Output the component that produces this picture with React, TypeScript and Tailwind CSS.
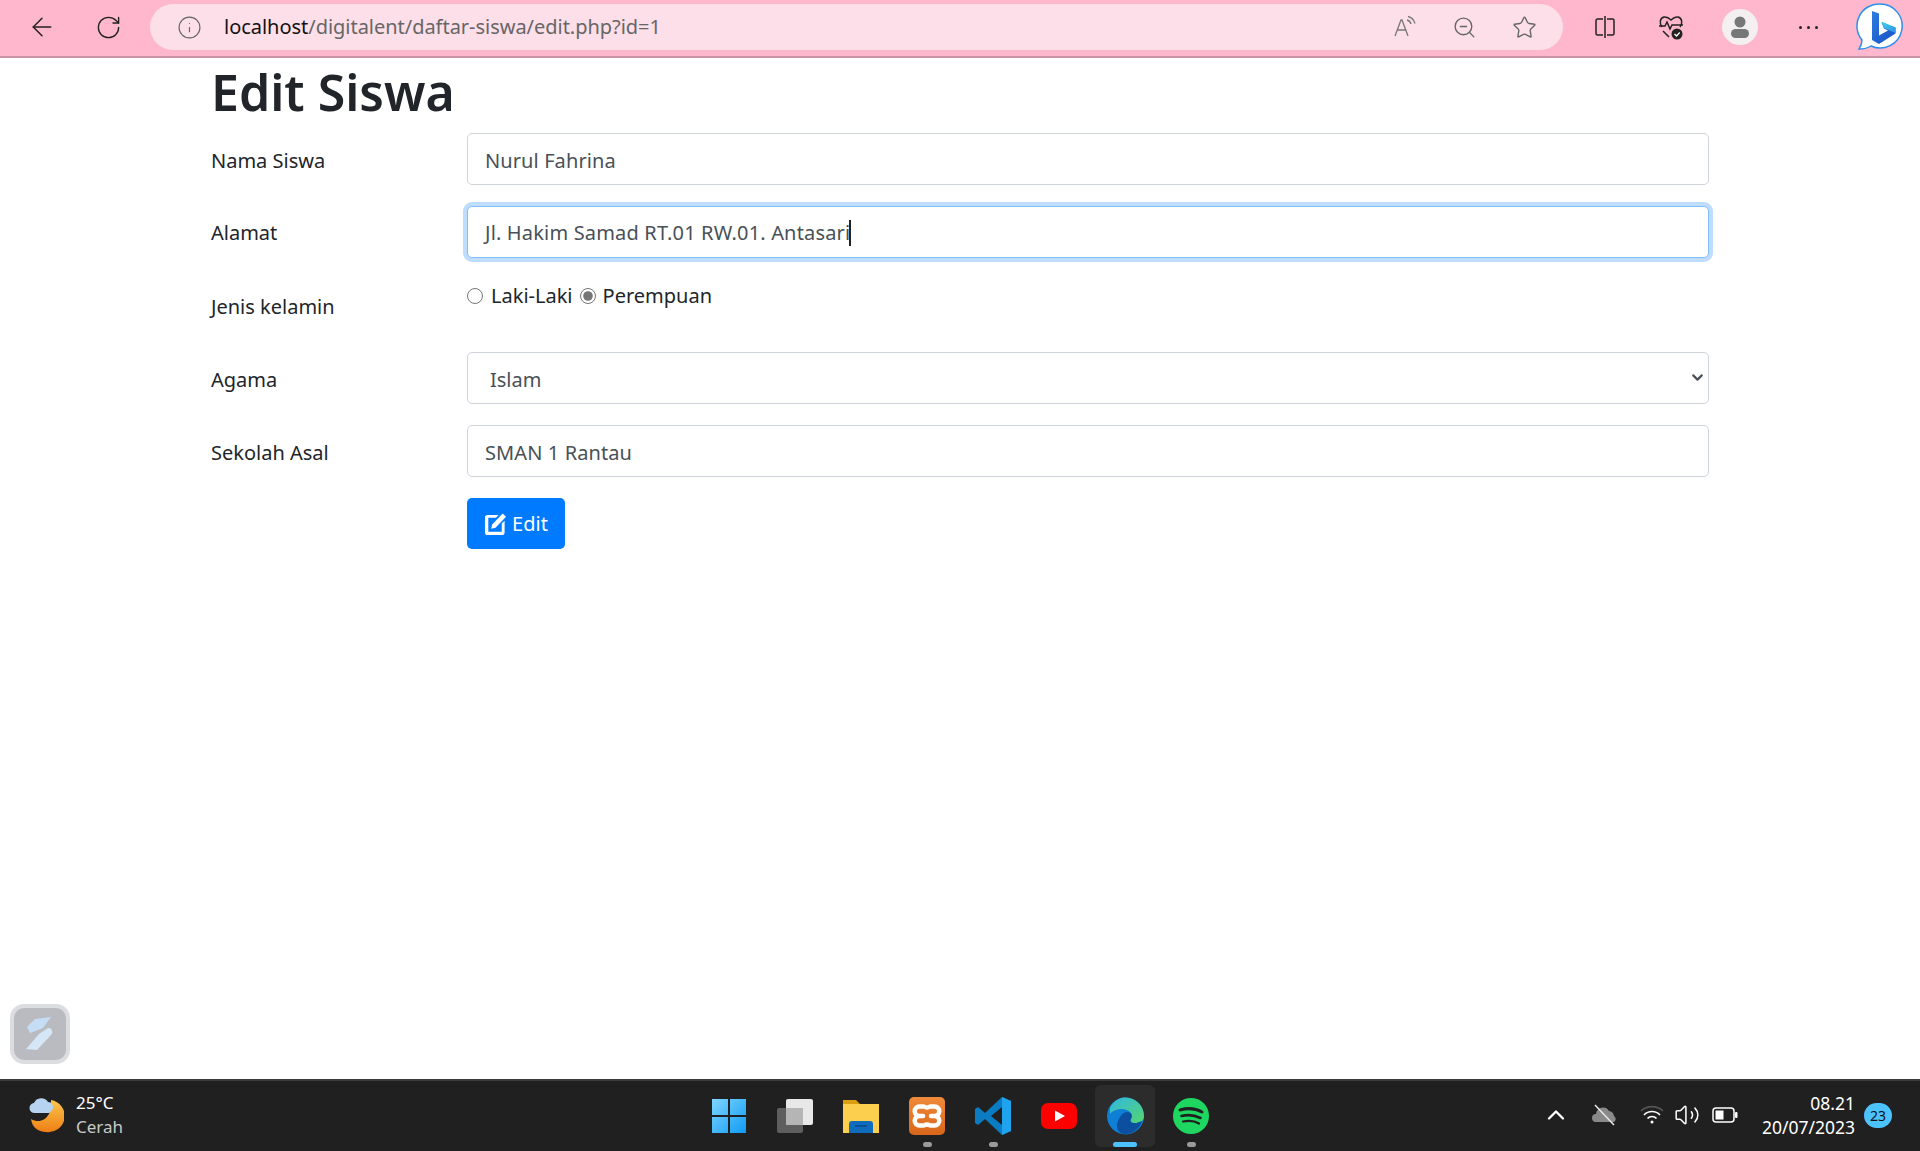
import { ArrowLeft, RotateCw, Info, ZoomOut, Star, ChevronUp, ChevronDown, Volume2 } from "lucide-react";

const font = "font-['Noto_Sans','Open_Sans',sans-serif]";

function ReadAloud() {
  return (
    <svg width="24" height="24" viewBox="0 0 24 24" fill="none" stroke="#777" strokeWidth="1.3">
      <path d="M2 21 8 5h1l6 16M4.500 15h9" />
      <path d="M14 5c2 .5 3.500 2 4 4M15 1.500c3.500 .8 6 3.500 7 7" />
    </svg>
  );
}

function SplitScreen() {
  return (
    <svg width="24" height="24" viewBox="0 0 24 24" fill="none" stroke="#222" strokeWidth="1.5">
      <path d="M10 4H4.500A1.500 1.500 0 0 0 3 5.500v13A1.500 1.500 0 0 0 4.500 20H10M14 4h5.500A1.500 1.500 0 0 1 21 5.500v13a1.500 1.500 0 0 1-1.500 1.500H14M12 1v22" />
    </svg>
  );
}

function HealthHeart() {
  return (
    <svg width="28" height="28" viewBox="0 0 28 28" fill="none">
      <path d="M5 14C2 10 3 5 7 4c3-.5 5 1 7 3 2-2 4-3.500 7-3 4 1 5 6 2 10" stroke="#222" strokeWidth="1.500" />
      <path d="M2 13h6l2-4 3 7 2-4h11M6 18l6 6" stroke="#222" strokeWidth="1.500" />
      <circle cx="20" cy="21" r="5.500" fill="#222" />
      <path d="m17.500 21 2 2 3.200-3.500" stroke="#fff" strokeWidth="1.300" />
    </svg>
  );
}

function BingLogo() {
  return (
    <svg width="48" height="50" viewBox="0 0 48 50">
      <defs>
        <linearGradient id="bing-b" x1="0" y1="0" x2="1" y2="1">
          <stop offset="0" stopColor="#2a7de1" />
          <stop offset="1" stopColor="#1b4fc4" />
        </linearGradient>
        <linearGradient id="bing-c" x1="0" y1="0" x2="1" y2="1">
          <stop offset="0" stopColor="#42d6e8" />
          <stop offset="1" stopColor="#2f8fe8" />
        </linearGradient>
      </defs>
      <path d="M24 2a22 22 0 1 1-9 42c-3 2-7 3-12 3 2-3 3-6 3-9A22 22 0 0 1 24 2Z" fill="#fff" stroke="#2f8fe8" strokeWidth="1.500" />
      <path d="M16 9l7 2.500v22l9-5-4-2-2.500-6 14 5v6L23 42l-7-4Z" fill="url(#bing-b)" />
      <path d="M25.500 19.500 39.500 25.500v5.500L28 26Z" fill="url(#bing-c)" />
    </svg>
  );
}

function BrowserBar() {
  return (
    <header className="flex h-[58px] shrink-0 items-center border-b-2 border-[#c993a6] bg-[#ffb7ce] pb-[2px]">
      <div className="flex w-[150px] shrink-0 items-center pl-[27px]">
        <ArrowLeft size={30} strokeWidth={1.2} className="text-[#222]" />
        <RotateCw size={27} strokeWidth={1.2} className="ml-[38px] text-[#222]" />
      </div>
      <div className="flex h-[46px] w-[1413px] shrink-0 items-center rounded-full bg-[#fddfe9] pl-[27px] pr-[26px]">
        <Info size={25} strokeWidth={1.1} className="text-[#666]" />
        <div className="ml-[22px] flex-1 text-[20px] tracking-[-0.03px] text-[#666]">
          <span className="text-[#111]">localhost</span>/digitalent/daftar-siswa/edit.php?id=1
        </div>
        <div className="flex items-center gap-[35px]">
          <ReadAloud />
          <ZoomOut size={25} strokeWidth={1.3} className="text-[#666]" />
          <Star size={25} strokeWidth={1.3} className="text-[#666]" />
        </div>
      </div>
      <div className="ml-[30px] flex items-center">
        <SplitScreen />
        <div className="ml-[40px]"><HealthHeart /></div>
        <div className="ml-[37px] flex h-[36px] w-[36px] items-center justify-center rounded-full bg-[#f4eff1]">
          <svg width="24" height="26" viewBox="0 0 24 26" fill="#777">
            <circle cx="12" cy="8" r="5.500" />
            <rect x="3" y="15" width="18" height="9" rx="4.500" />
          </svg>
        </div>
        <div className="ml-[41px] flex gap-[5px]">
          <span className="h-[3px] w-[3px] rounded-full bg-[#222]" />
          <span className="h-[3px] w-[3px] rounded-full bg-[#222]" />
          <span className="h-[3px] w-[3px] rounded-full bg-[#222]" />
        </div>
        <div className="ml-[38px]"><BingLogo /></div>
      </div>
    </header>
  );
}

function FieldRow({ label, children, offset }: { label: string; children: React.ReactNode; offset?: string }) {
  return (
    <div className="mb-[21px] flex">
      <label className={"w-[256px] shrink-0 text-[20px] leading-[30px] text-[#212529] " + (offset ?? "pt-[12px]")}>{label}</label>
      <div className="flex-1">{children}</div>
    </div>
  );
}

function Box({ value }: { value: string }) {
  return (
    <div className="flex h-[52px] items-center rounded-[5px] border border-[#ced4da] bg-white px-[17px] pt-[3px] text-[20px] tracking-[0.1px] text-[#495057]">
      {value}
    </div>
  );
}

function EditForm() {
  return (
    <div className="ml-[211px] w-[1498px]">
      <h1 className="mb-[9px] h-[66px] text-[50px] font-semibold leading-[68px] text-[#212529]">Edit Siswa</h1>
      <FieldRow label="Nama Siswa" offset="pt-[13px]"><Box value="Nurul Fahrina" /></FieldRow>
      <FieldRow label="Alamat">
        <div className="flex h-[52px] items-center rounded-[5px] border border-[#80bdff] bg-white px-[17px] pt-[2px] text-[20px] tracking-[0.17px] text-[#495057] shadow-[0_0_0_4px_#bfdeff]">
          Jl. Hakim Samad RT.01 RW.01. Antasari
          <span className="-ml-[1px] h-[26px] w-[2px] bg-[#222]" />
        </div>
      </FieldRow>
      <FieldRow label="Jenis kelamin" offset="pt-[13px]">
        <div className="flex h-[52px] items-start pt-[2px] text-[20px] leading-[30px] text-[#212529]">
          <label className="flex items-center">
            <input type="radio" name="jk" readOnly className="h-[16px] w-[16px] accent-[#767676]" />
            <span className="ml-[8px]">Laki-Laki</span>
          </label>
          <label className="ml-[7px] flex items-center">
            <input type="radio" name="jk" readOnly checked className="h-[16px] w-[16px] accent-[#767676]" />
            <span className="ml-[7px]">Perempuan</span>
          </label>
        </div>
      </FieldRow>
      <FieldRow label="Agama" offset="pt-[13px]">
        <div className="relative">
          <select className="h-[52px] w-full appearance-none rounded-[5px] border border-[#ced4da] bg-white px-[22px] pt-[3px] text-[20px] text-[#495057]" defaultValue="Islam">
            <option>Islam</option>
            <option>Kristen</option>
            <option>Hindu</option>
            <option>Budha</option>
          </select>
          <ChevronDown size={17} strokeWidth={3} className="absolute right-[3px] top-[17px] text-[#495057]" />
        </div>
      </FieldRow>
      <FieldRow label="Sekolah Asal" offset="pt-[13px]"><Box value="SMAN 1 Rantau" /></FieldRow>
      <div className="ml-[256px]">
        <button className="flex h-[51px] w-[98px] items-center justify-center gap-[5px] rounded-[5px] bg-[#007bff] text-[20px] text-white">
          <svg width="23" height="23" viewBox="0 0 24 24" fill="#fff">
            <path d="M4 3h11l-2.500 3H4.500v14.500h14V12l3-3v12a3 3 0 0 1-3 3H4a3 3 0 0 1-3-3V6a3 3 0 0 1 3-3Z" />
            <path d="M19.500 1.500 23 5 12 16.500l-4.500 1 1-4.500Z" />
          </svg>
          Edit
        </button>
      </div>
    </div>
  );
}

function FloatingBadge() {
  return (
    <div className="absolute bottom-[15px] left-[10px] flex h-[60px] w-[60px] items-center justify-center rounded-[14px] border-4 border-[#dcdde1] bg-[#babbc0]">
      <svg width="28" height="34" viewBox="0 0 28 34">
        <path d="M9 2 25 0 17 11 4 16 1 10Z" fill="#c5def5" />
        <path d="M22 11a4 4 0 0 1 3 7L11 33l-11-1 13-15Z" fill="#d5e6f7" />
      </svg>
    </div>
  );
}

function WinIcon() {
  return (
    <svg width="36" height="36" viewBox="0 0 36 36">
      <defs>
        <linearGradient id="win" x1="0" y1="0" x2="1" y2="1">
          <stop offset="0" stopColor="#7fd6fd" />
          <stop offset="1" stopColor="#0f9af5" />
        </linearGradient>
      </defs>
      <path d="M1 1h16v16H1zM19 1h16v16H19zM1 19h16v16H1zM19 19h16v16H19z" fill="url(#win)" />
    </svg>
  );
}

function TaskView() {
  return (
    <svg width="38" height="36" viewBox="0 0 38 36">
      <rect x="1" y="10" width="26" height="25" rx="2" fill="#5e5e5e" />
      <rect x="10" y="1" width="27" height="26" rx="2" fill="#e8e8e8" />
      <rect x="10" y="10" width="17" height="17" fill="#b5b5b5" />
    </svg>
  );
}

function FolderIcon() {
  return (
    <svg width="36" height="36" viewBox="0 0 36 36">
      <path d="M0 2h13l4 4h19v4H0Z" fill="#d99f11" />
      <path d="M0 6h36v29H0Z" fill="#fcd04e" />
      <path d="M6 26a3 3 0 0 1 3-3h18a3 3 0 0 1 3 3v9H6Z" fill="#0f6cbd" />
      <rect x="12" y="27" width="12" height="2" fill="#0a4f8f" />
    </svg>
  );
}

function XamppIcon() {
  return (
    <svg width="36" height="38" viewBox="0 0 36 38" fill="none">
      <defs>
        <linearGradient id="xampp" x1="0" y1="0" x2="0" y2="1">
          <stop offset="0" stopColor="#f08a3a" />
          <stop offset="1" stopColor="#d9661a" />
        </linearGradient>
      </defs>
      <rect width="36" height="38" rx="5" fill="url(#xampp)" />
      <path d="M15 9.500h-4.500a4.750 4.750 0 0 0 0 9.500h3.500h-3.500a4.750 4.750 0 0 0 0 9.500h4.500q3-2 6 0h4.500a4.750 4.750 0 0 0 0-9.500h-3.500h3.500a4.750 4.750 0 0 0 0-9.500h-4.500q-3 2-6 0Z" stroke="#fff" strokeWidth="4.500" strokeLinejoin="round" />
    </svg>
  );
}

function VscodeIcon() {
  return (
    <svg width="36" height="38" viewBox="0 0 36 38">
      <path d="M27 0 36 4v30l-9 4L10 22 3 28l-3-2v-14l3-2 7 6Z" fill="#0a7cc4" />
      <path d="M27 0 36 4v30l-9 4Z" fill="#20a3ee" />
      <path d="M27 10 16 19l11 9Z" fill="#202020" />
    </svg>
  );
}

function YoutubeIcon() {
  return (
    <svg width="36" height="26" viewBox="0 0 36 26">
      <rect width="36" height="26" rx="7" fill="#ff0000" />
      <path d="M14 7.500 24 13l-10 5.500Z" fill="#fff" />
    </svg>
  );
}

function EdgeIcon() {
  return (
    <svg width="37" height="38" viewBox="0 0 37 38">
      <defs>
        <linearGradient id="edge-a" x1="0" y1="0" x2="1" y2="1">
          <stop offset="0" stopColor="#30b7e0" />
          <stop offset="1" stopColor="#56d66e" />
        </linearGradient>
      </defs>
      <circle cx="18.500" cy="19" r="18.500" fill="#0f7fd6" />
      <path d="M3 11C7 3 13 .5 18.500 .5 29 .5 37 9 37 19c0 5-4 7-9 7-3 0-6-1-6-3 3-1 4-4 2-7-3-4-10-5-15-3-3 1-5 2-6 4Z" fill="url(#edge-a)" />
      <path d="M20 15c4 0 6 3 4 7-2 5 5 5 11 2-2 7-9 13-17 13-7 0-10-7-7-13 2-5 5-9 9-9Z" fill="#0c4f9e" />
    </svg>
  );
}

function SpotifyIcon() {
  return (
    <svg width="36" height="36" viewBox="0 0 36 36" fill="none">
      <circle cx="18" cy="18" r="18" fill="#1ed760" />
      <path d="M7 12c7-2 15-2 22 2" stroke="#202020" strokeWidth="3" strokeLinecap="round" />
      <path d="M8.500 18c6-1.500 13-1 19 2" stroke="#202020" strokeWidth="2.600" strokeLinecap="round" />
      <path d="M10 23.500c5-1 11-1 16 2" stroke="#202020" strokeWidth="2.200" strokeLinecap="round" />
    </svg>
  );
}

function TaskItem({ children, dot, active }: { children: React.ReactNode; dot?: boolean; active?: boolean }) {
  return (
    <div className="relative flex h-[62px] w-[66px] items-center justify-center">
      {active && <span className="absolute inset-y-0 inset-x-[3px] rounded-[6px] bg-[#2c2c2c]" />}
      <span className="relative flex">{children}</span>
      {dot && <span className="absolute bottom-0 h-[5px] w-[9px] rounded-full bg-[#9b9b9b]" />}
      {active && <span className="absolute bottom-0 h-[5px] w-[24px] rounded-full bg-[#4cc2ff]" />}
    </div>
  );
}

function Taskbar() {
  return (
    <footer className="relative flex h-[72px] shrink-0 items-center justify-between border-t-2 border-[#3b3b3b] bg-[#202020] pb-[2px] font-['Noto_Sans',sans-serif] text-white">
      <div className="flex items-center pl-[29px]">
        <svg width="35" height="36" viewBox="0 0 35 36">
          <defs>
            <linearGradient id="moon" x1="0" y1="0" x2="0" y2="1">
              <stop offset="0" stopColor="#fcc64a" />
              <stop offset="1" stopColor="#ee7e16" />
            </linearGradient>
          </defs>
          <path d="M22 3a16 16 0 0 1-5 32C9 35 3 30 2 22c7 4 14 2 18-5 2-5 2-10 2-14Z" fill="url(#moon)" />
          <path d="M6 16a5 5 0 0 1-1-10 8 8 0 0 1 14-1 5 5 0 0 1 3 9 3 3 0 0 1-2 2Z" fill="#b6d4f2" />
        </svg>
        <div className="ml-[12px] text-[17px] leading-[24px]">
          <div>25°C</div>
          <div className="text-[#c9c9c9]">Cerah</div>
        </div>
      </div>

      <div className="absolute inset-x-0 top-[4px] flex justify-center">
        <TaskItem><WinIcon /></TaskItem>
        <TaskItem><TaskView /></TaskItem>
        <TaskItem><FolderIcon /></TaskItem>
        <TaskItem dot><XamppIcon /></TaskItem>
        <TaskItem dot><VscodeIcon /></TaskItem>
        <TaskItem><YoutubeIcon /></TaskItem>
        <TaskItem active><EdgeIcon /></TaskItem>
        <TaskItem dot><SpotifyIcon /></TaskItem>
      </div>

      <div className="flex items-center pr-[28px]">
        <ChevronUp size={28} strokeWidth={2} />
        <svg className="ml-[22px]" width="26" height="22" viewBox="0 0 26 22" fill="#8a8a8a">
          <path d="M4 18a4 4 0 0 1 0-8 7 7 0 0 1 13-3 6 6 0 0 1 5 5 3.500 3.500 0 0 1 0 6Z" />
          <path d="M3 1l19 20" stroke="#e8e8e8" strokeWidth="1.500" />
        </svg>
        <svg className="ml-[22px]" width="24" height="22" viewBox="0 0 24 22" fill="none" stroke="#fff" strokeWidth="1.600">
          <path d="M1 7a16 16 0 0 1 22 0" stroke="#555" />
          <path d="M4 11a11 11 0 0 1 16 0M7.500 14.500a6 6 0 0 1 9 0" />
          <circle cx="12" cy="18" r="1.500" fill="#fff" stroke="none" />
        </svg>
        <Volume2 className="ml-[10px]" size={26} strokeWidth={1.4} />
        <svg className="ml-[12px]" width="26" height="16" viewBox="0 0 26 16" fill="none">
          <rect x="1" y="1" width="21" height="14" rx="3" stroke="#fff" strokeWidth="1.500" />
          <rect x="3.500" y="3.500" width="8" height="9" fill="#fff" />
          <rect x="23" y="5" width="2.500" height="6" rx="1" fill="#fff" />
        </svg>
        <div className="ml-[24px] text-right text-[17.5px] leading-[24px]">
          <div>08.21</div>
          <div>20/07/2023</div>
        </div>
        <span className="ml-[9px] flex h-[25px] w-[28px] items-center justify-center rounded-full bg-[#4cc2ff] text-[14px] text-[#111]">23</span>
      </div>
    </footer>
  );
}

export default function App() {
  return (
    <div className={"flex h-screen flex-col overflow-hidden bg-white " + font}>
      <BrowserBar />
      <main className="relative flex-1">
        <EditForm />
        <FloatingBadge />
      </main>
      <Taskbar />
    </div>
  );
}
